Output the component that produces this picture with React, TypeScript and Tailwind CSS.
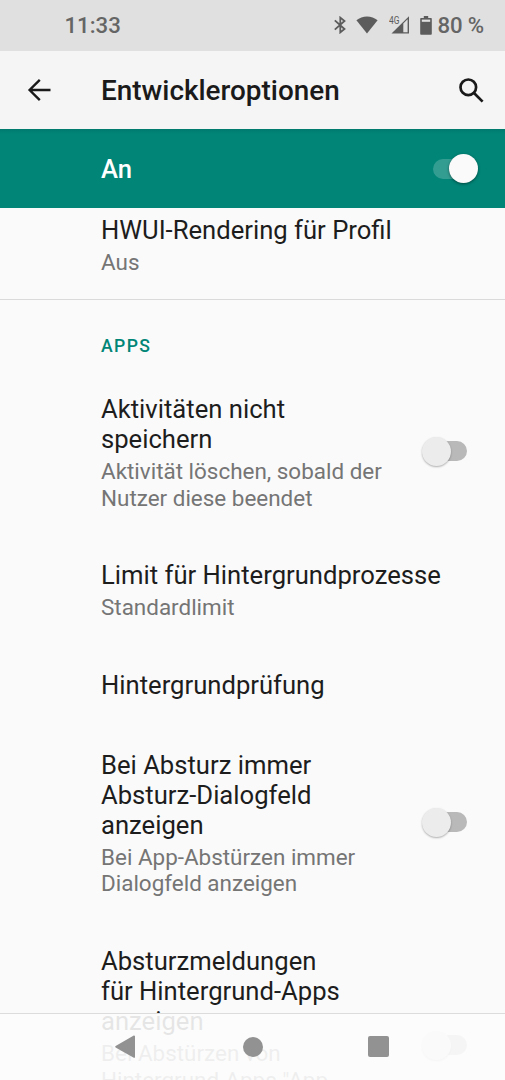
import React from 'react';
import { clsx } from 'clsx';

interface Setting {
  title: string[];
  summary?: string[];
  hasSwitch?: boolean;
}

const APP_SETTINGS: Setting[] = [
  {
    title: ['Aktivitäten nicht', 'speichern'],
    summary: ['Aktivität löschen, sobald der', 'Nutzer diese beendet'],
    hasSwitch: true,
  },
  { title: ['Limit für Hintergrundprozesse'], summary: ['Standardlimit'] },
  { title: ['Hintergrundprüfung'] },
  {
    title: ['Bei Absturz immer', 'Absturz-Dialogfeld', 'anzeigen'],
    summary: ['Bei App-Abstürzen immer', 'Dialogfeld anzeigen'],
    hasSwitch: true,
  },
  {
    title: ['Absturzmeldungen', 'für Hintergrund-Apps', 'anzeigen'],
    summary: ['Bei Abstürzen von', 'Hintergrund-Apps "App'],
    hasSwitch: true,
  },
];

const Switch: React.FC<{ checked?: boolean }> = ({ checked = false }) => (
  <div
    role="switch"
    aria-checked={checked}
    className="flex h-[29px] w-[45px] shrink-0 items-center"
  >
    {/* Track */}
    <div
      className={clsx('h-5 w-9 shrink-0 rounded-full', checked ? '-mr-5 bg-white/20' : 'order-2 -ml-5 bg-[#b9b9b9]')}
    />
    {/* Thumb */}
    <div
      className={clsx(
        'relative z-10 size-[29px] shrink-0 rounded-full',
        checked ? 'bg-[#fafafa] shadow-[0_1px_3px_rgba(0,0,0,0.45)]' : 'bg-[#ececec] shadow-[0_1px_2px_rgba(0,0,0,0.3)]',
      )}
    />
  </div>
);

const SettingRow: React.FC<{ setting: Setting; className?: string }> = ({ setting, className }) => (
  <div className={clsx('flex items-center justify-between pb-[25.3px] pl-[101px] pr-[38px] pt-[24.1px]', className)}>
    <div className="h-full whitespace-nowrap">
      <div className="text-[25.63px] leading-[30px] text-[#1d1d1d]">
        {setting.title.map(line => (
          <p key={line}>{line}</p>
        ))}
      </div>
      {setting.summary && (
        <div className="mt-1 text-[22.45px] leading-[26.5px] text-[#757575]">
          {setting.summary.map(line => (
            <p key={line}>{line}</p>
          ))}
        </div>
      )}
    </div>
    {setting.hasSwitch && (
      <div className="pb-[2.5px]">
        <Switch />
      </div>
    )}
  </div>
);

const StatusBar = () => (
  <div className="flex h-[51px] shrink-0 items-center bg-[#e0e0e0] pl-[64.5px] pr-[21px] text-[22.2px] font-medium text-[#656565]">
    <span className="pt-px">11:33</span>
    <div className="ml-auto flex items-center">
      <svg width="12" height="18" viewBox="0 0 12 18" fill="none" stroke="#5c5c5c" strokeWidth="1.8">
        <path d="M.8 4.3 10.5 13 6.3 16.4V1.6l4.2 3.4L.8 13.7" />
      </svg>
      <svg className="ml-[10px]" width="22" height="18" viewBox="0 0 22 18" fill="#5c5c5c">
        <path d="M11 17.6.4 4.3Q5 .4 11 .4t10.6 3.9Z" />
      </svg>
      <svg className="ml-[11px]" width="21" height="18" viewBox="0 0 21 18">
        <path d="M20 .2v17.4H2.5Z" fill="#5c5c5c" />
        <path d="M14.3 7.5 18.6 3.2v13h-4.3Z" fill="#e0e0e0" />
        <text x="0" y="8.2" fontSize="10" fontFamily="Roboto" fontWeight="400" textLength="10.5" lengthAdjust="spacingAndGlyphs" fill="#5c5c5c">4G</text>
      </svg>
      <svg className="ml-[10px]" width="12" height="19" viewBox="0 0 12 19" fill="#5c5c5c">
        <path d="M3.8 0h4.4v2H11q.8 0 .8.8v15q0 .9-.8.9H1q-.8 0-.8-.9v-15Q.2 2 1 2h2.8Z" />
        <path d="M1.8 3.6h8.4v2.2H1.8Z" fill="#e0e0e0" />
      </svg>
      <span className="ml-1.5 pt-px tracking-[-0.15px]">80 %</span>
    </div>
  </div>
);

const AppBar = () => (
  <header className="flex h-[78px] shrink-0 items-center bg-[#f5f5f5] pl-[27px] pr-[20px] text-[#1a1a1a]">
    <svg width="25" height="24" viewBox="0 0 25 24" fill="none" stroke="currentColor" strokeWidth="2.4">
      <path d="M23.5 12H3M12.8 1.8 2.6 12l10.2 10.2" />
    </svg>
    <h1 className="ml-[49px] pt-[2px] text-[27.9px] font-medium">Entwickleroptionen</h1>
    <svg className="ml-auto" width="27" height="27" viewBox="0 0 27 27" fill="none" stroke="currentColor" strokeWidth="2.7">
      <circle cx="10.3" cy="10.3" r="7.8" />
      <path d="m16 16 8.6 8.6" />
    </svg>
  </header>
);

const NavBar = () => (
  <nav className="absolute inset-x-0 bottom-0 z-20 flex h-[67px] items-center border-t border-[#dcdcdc] bg-[#fcfcfc]/90 pb-px pl-[114px]">
    <svg width="22" height="24" viewBox="0 0 22 24" fill="#929292">
      <path d="M20.2 1.3v20.8L2 11.7Z" stroke="#929292" strokeWidth="1.6" strokeLinejoin="round" />
    </svg>
    <div className="ml-[106.5px] size-5 rounded-full bg-[#929292]" />
    <div className="ml-[105.5px] size-[21px] rounded-[2px] bg-[#929292]" />
  </nav>
);

export default function App() {
  return (
    <div className="relative flex h-[1080px] w-[505px] flex-col overflow-hidden bg-[#fafafa] font-['Roboto',sans-serif]">
      <StatusBar />
      <AppBar />
      <div className="relative z-10 flex h-[79px] shrink-0 items-center justify-between bg-[#008577] bg-linear-to-b from-[#007a6d] to-[#008577] to-[5px] pl-[101px] pr-[27px]">
        <span className="pt-[2px] text-[25.6px] font-medium text-white">An</span>
        <Switch checked />
      </div>
      <main className="min-h-0 flex-1 overflow-hidden">
        <div className="-mt-[17px] h-[109px] border-b border-[#dadada]">
          <SettingRow setting={{ title: ['HWUI-Rendering für Profil'], summary: ['Aus'] }} />
        </div>
        <h2 className="pb-[12px] pl-[101px] pt-[35px] text-[17.6px] font-medium leading-[23px] tracking-[1.4px] text-[#008577]">
          APPS
        </h2>
        {APP_SETTINGS.map((setting, i) => (
          <SettingRow
            key={setting.title[0]}
            setting={setting}
            // The last entry runs on below the screen edge
            className={i === APP_SETTINGS.length - 1 ? 'h-[250px]' : undefined}
          />
        ))}
      </main>
      <NavBar />
    </div>
  );
}
